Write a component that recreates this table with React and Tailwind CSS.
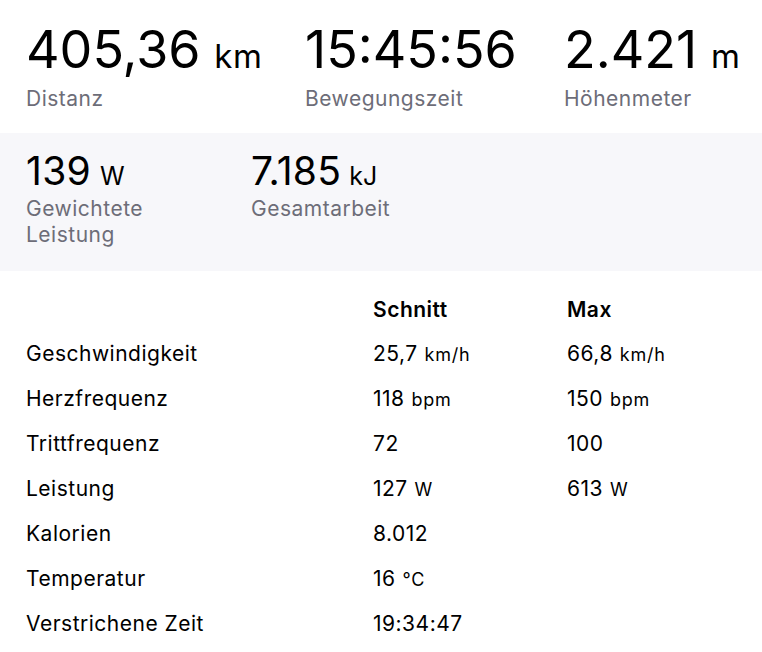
import React from 'react';

const topStats = [
  { value: '405,36', unit: 'km', label: 'Distanz', width: 'w-[279px]' },
  { value: '15:45:56', unit: '', label: 'Bewegungszeit', width: 'w-[259px]' },
  { value: '2.421', unit: 'm', label: 'Höhenmeter', width: 'w-[190px]' },
];

const rows = [
  { label: 'Geschwindigkeit', avg: '25,7', avgUnit: 'km/h', max: '66,8', maxUnit: 'km/h' },
  { label: 'Herzfrequenz', avg: '118', avgUnit: 'bpm', max: '150', maxUnit: 'bpm' },
  { label: 'Trittfrequenz', avg: '72', avgUnit: '', max: '100', maxUnit: '' },
  { label: 'Leistung', avg: '127', avgUnit: 'W', max: '613', maxUnit: 'W' },
  { label: 'Kalorien', avg: '8.012', avgUnit: '', max: '', maxUnit: '' },
  { label: 'Temperatur', avg: '16', avgUnit: '°C', max: '', maxUnit: '' },
  { label: 'Verstrichene Zeit', avg: '19:34:47', avgUnit: '', max: '', maxUnit: '' },
];

const Value = ({ value, unit }) => (
  <span>
    {value}
    {unit && <span className="text-[18px] leading-none tracking-[0.8px] pl-[1px]"> {unit}</span>}
  </span>
);

const App = () => {
  return (
    <div className="w-[762px] h-[652px] bg-white text-black font-['Inter',sans-serif] overflow-hidden">
      {/* top stats */}
      <div className="flex h-[133px] px-[26px] pt-[24px]">
        {topStats.map((s) => (
          <div key={s.label} className={`${s.width} shrink-0`}>
            <div className="h-[52px] text-[52px] leading-[52px] tracking-normal whitespace-nowrap">
              {s.value}
              {s.unit && <span className="text-[33px] leading-none tracking-[0.5px] pl-[4px]">&nbsp;{s.unit}</span>}
            </div>
            <div className="mt-[9px] text-[21px] leading-[28px] tracking-[0.5px] text-[#6d6d78]">{s.label}</div>
          </div>
        ))}
      </div>

      {/* secondary stats */}
      <div className="flex h-[138px] bg-[#f7f7fa] px-[26px] pt-[19px]">
        <div className="w-[225px] shrink-0">
          <div className="h-[38px] text-[39px] leading-[38px] tracking-[0.3px]">
            139<span className="text-[25px] leading-none tracking-normal pl-[2px]">&nbsp;W</span>
          </div>
          <div className="mt-[6px] text-[21px] leading-[26px] tracking-[0.5px] text-[#6d6d78]">
            Gewichtete
            <br />
            Leistung
          </div>
        </div>
        <div>
          <div className="h-[38px] text-[39px] leading-[38px] tracking-[0.3px]">
            7.185<span className="text-[25px] leading-none tracking-normal pl-[1px]">&nbsp;kJ</span>
          </div>
          <div className="mt-[6px] text-[21px] leading-[26px] tracking-[0.5px] text-[#6d6d78]">Gesamtarbeit</div>
        </div>
      </div>

      {/* table */}
      <div className="px-[26px] pt-[17px] text-[21px] tracking-[0.5px]">
        <div className="flex h-[43px] leading-[43px] font-semibold">
          <div className="w-[347px]" />
          <div className="w-[194px]">Schnitt</div>
          <div>Max</div>
        </div>
        {rows.map((r) => (
          <div key={r.label} className="flex h-[45px] leading-[45px]">
            <div className="w-[347px]">{r.label}</div>
            <div className="w-[194px]">
              <Value value={r.avg} unit={r.avgUnit} />
            </div>
            <div>{r.max && <Value value={r.max} unit={r.maxUnit} />}</div>
          </div>
        ))}
      </div>
    </div>
  );
};

export default App;
